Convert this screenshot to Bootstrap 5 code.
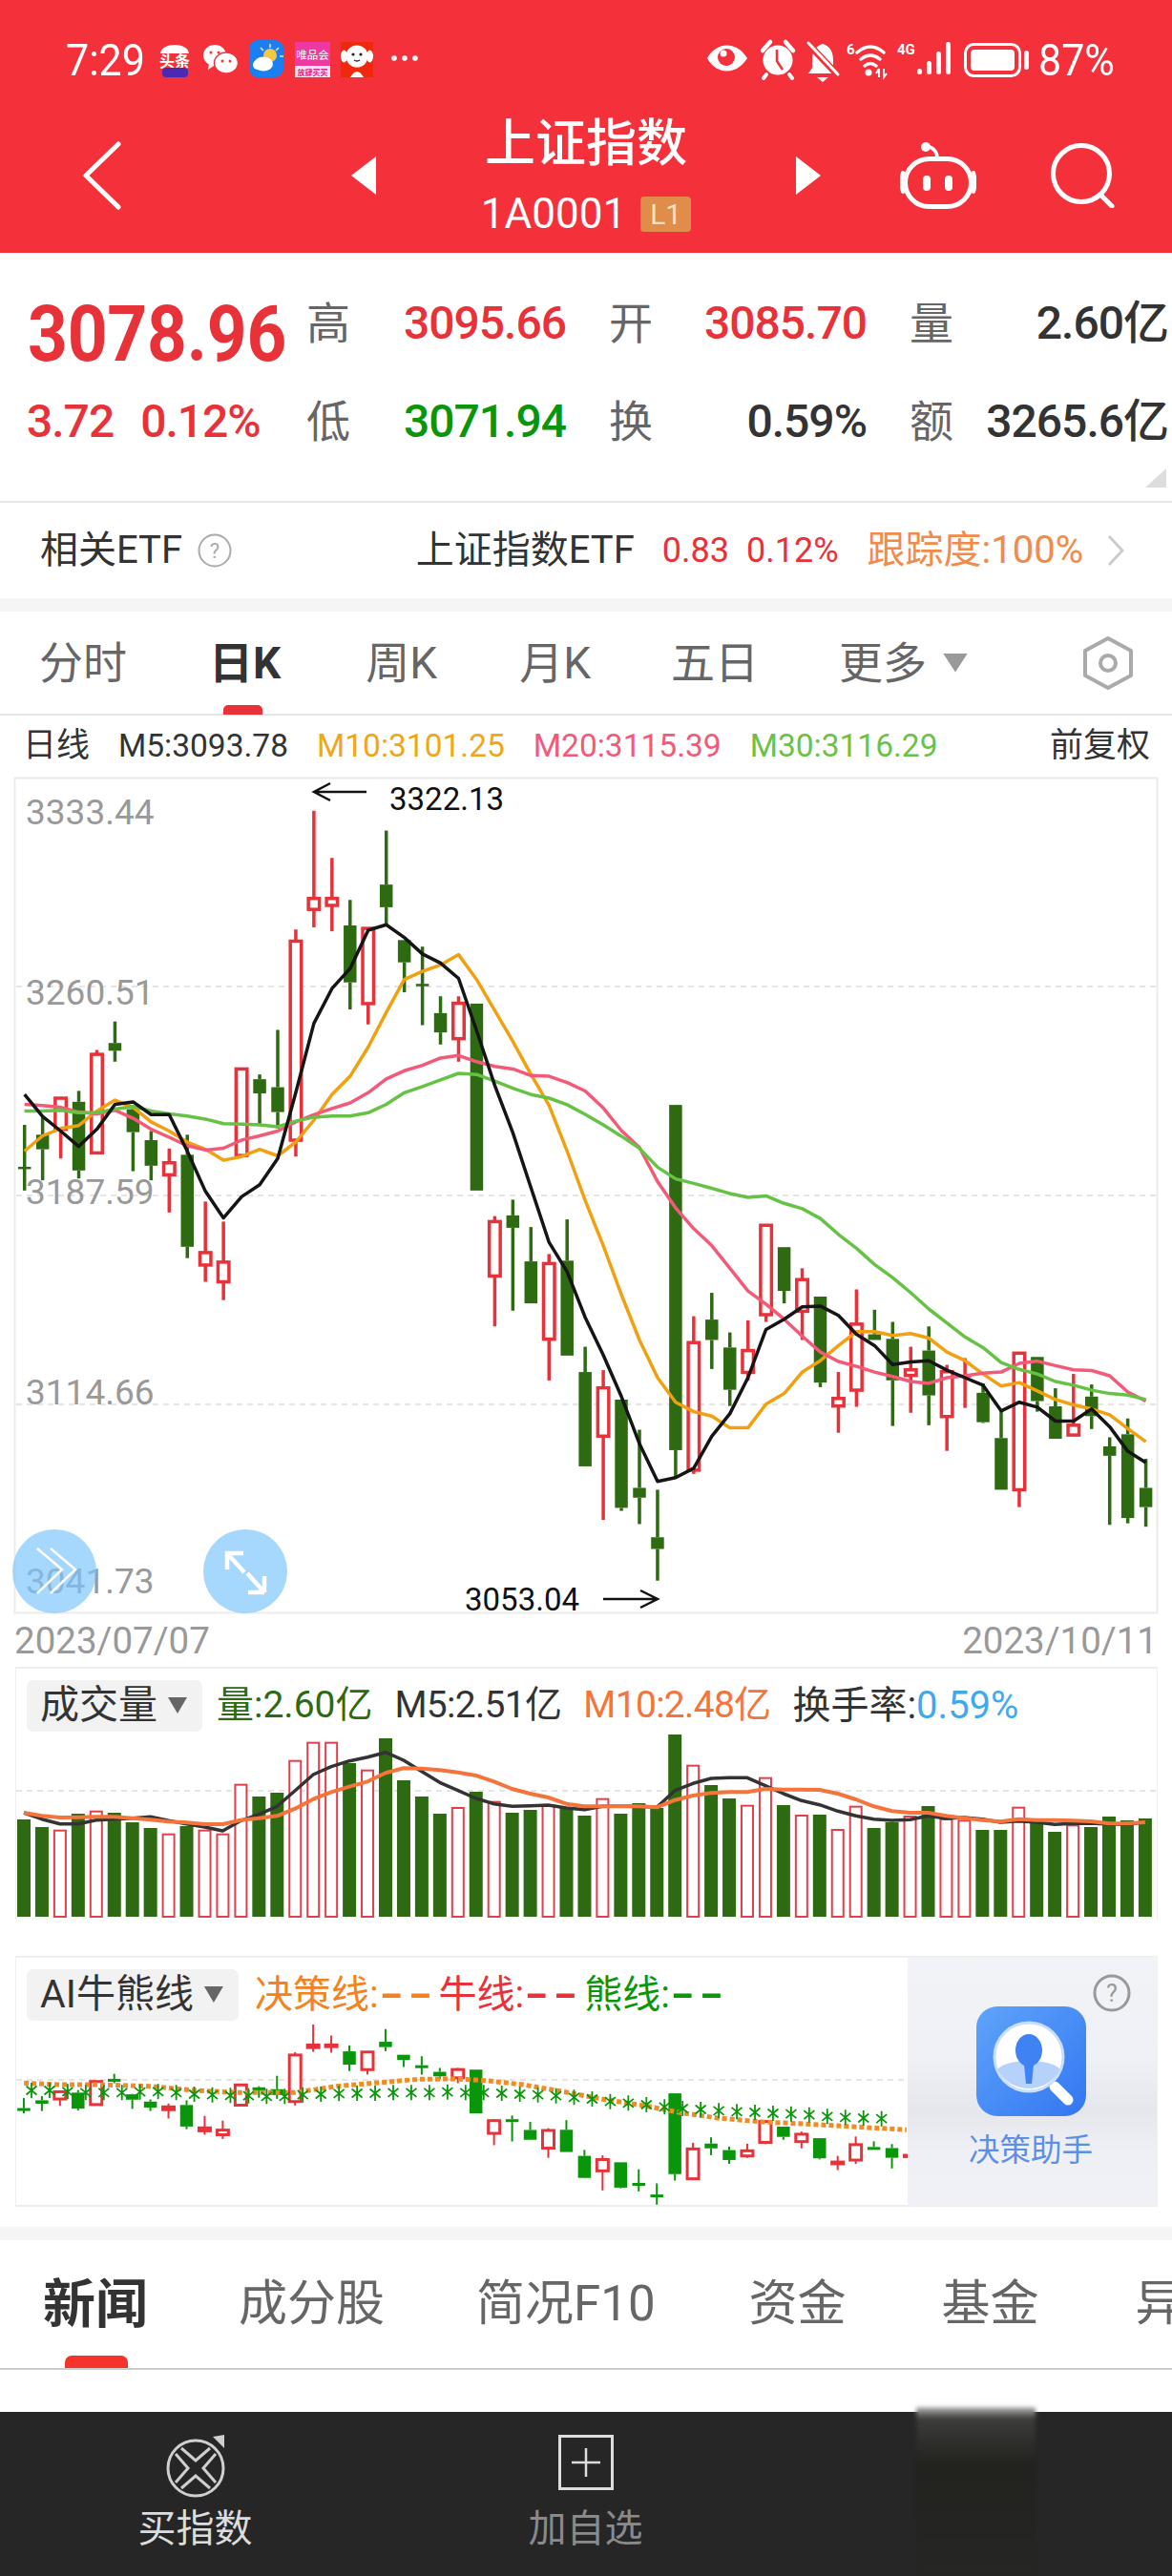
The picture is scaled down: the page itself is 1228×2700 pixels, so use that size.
<!DOCTYPE html>
<html lang="zh">
<head>
    <meta charset="UTF-8">
    <meta name="viewport" content="width=device-width, initial-scale=1.0">
    <title>上证指数</title>
    <link href="https://cdn.jsdelivr.net/npm/bootstrap@5.3.0/dist/css/bootstrap.min.css" rel="stylesheet">
    <style>
        body {
            background: #fff;
            width: 1228px;
            height: 2700px;
            overflow: hidden;
            font-family: Roboto, "Noto Sans CJK SC", sans-serif;
            color: #333;
        }
        svg { display: block; flex: none; }
        #mainChart { overflow: visible; }

        /* 顶部红色区域 */
        .top-bar { background: #f4313b; height: 265px; color: #fff; }
        .status-row { height: 115px; padding: 11px 0 0 69px; font-size: 43px; line-height: 1; }
        .status-text { display: inline-block; transform: scaleY(1.08); }
        .status-left { margin-left: 14px; }
        .status-right { margin-left: auto; }
        .status-pct { width: 143px; padding-left: 3px; }
        .title-row { height: 138px; padding-left: 86px; }
        .title-block { width: 440px; }
        .title-name { font-size: 53px; line-height: 62px; font-weight: 500; margin-bottom: 18px; }
        .title-code { font-size: 44px; line-height: 48px; gap: 15px; }
        .level-tag { background: #e08c4a; color: #f6e2cc; width: 53px; height: 37px; line-height: 37px; font-size: 30px; border-radius: 4px; }
        .tri-left { margin-left: 241px; }
        .robot-icon { margin-left: 83px; }
        .search-icon { margin-left: 78px; }

        /* 行情 */
        .quote-panel { height: 262px; border-bottom: 2px solid #e6e6e6; padding-top: 39px; }
        .quote-grid {
            display: grid;
            grid-template-columns: 321px 46px 226px 45px 45px 225px 45px 47px 224px;
            grid-auto-rows: 70px;
            row-gap: 33px;
            align-items: center;
            font-size: 48px;
            letter-spacing: -1px;
            font-weight: 500;
        }
        .quote-grid .q-label { color: #666; font-weight: 400; font-size: 46px; letter-spacing: 0; }
        .quote-price { padding-left: 29px; margin-top: 30px; line-height: 70px; }
        .quote-price span { display: inline-block; font-size: 73px; font-weight: 700; letter-spacing: -.2px; transform: scaleY(1.12); }
        .quote-change { padding-left: 28px; }
        .quote-change span + span { margin-left: 28px; }
        .text-up { color: #e8323a; }
        .text-down { color: #0a960a; }
        .corner-mark { margin: 14px 6px 0 0; }

        /* ETF */
        .etf-row { height: 100px; padding: 0 50px 0 42px; font-size: 40px; }
        .etf-help { margin-left: 16px; }
        .etf-values { font-size: 36px; margin-left: 29px; margin-right: 30px; }
        .etf-values span + span { margin-left: 18px; }
        .etf-track { color: #f28a4a; margin-right: 25px; }
        .gap-band { height: 14px; background: #f5f5f5; }

        /* 周期切换 */
        .period-tabs { height: 109px; padding-left: 41px; border-bottom: 2px solid #e6e6e6; gap: 86px; font-size: 46px; flex-wrap: nowrap; }
        .period-tabs .nav-link { padding: 0; color: #666; line-height: 108px; position: relative; white-space: nowrap; }
        .period-tabs .nav-link.active-tab { color: #333; font-weight: 700; }
        .period-tabs .nav-link.active-tab::after {
            content: "";
            position: absolute;
            left: 15px;
            bottom: 0;
            width: 41px;
            height: 10px;
            background: #e8323a;
            border-radius: 5px 5px 0 0;
        }
        .period-tabs .tab-week { margin-left: 3px; }
        .period-tabs .tab-tight { margin-left: -2px; }
        .more-arrow { width: 26px; height: 20px; background: #999; clip-path: polygon(0 0, 100% 0, 50% 100%); margin-left: 17px; }
        .period-hex { margin-left: auto; margin-right: 40px; }

        .ma-row { height: 65px; padding: 0 23px 0 24px; font-size: 33.5px; gap: 30px; }
        .ma-row .ma-name { font-size: 35px; }
        .ma-10 { color: #eea71b; }
        .ma-20 { color: #f25a7a; }
        .ma-30 { color: #6bc246; }

        .date-row { height: 56px; padding: 0 15px 0 15px; color: #999; font-size: 38.5px; line-height: 58px; }

        /* 副图 */
        .sub-panel { margin: 0 15px 0 16px; border: solid #eee; border-width: 2px 1px 0; padding-top: 11px; }
        .ai-panel { margin-top: 38px; height: 263px; border-width: 2px 1px; padding-top: 0; }
        .legend-row { height: 55px; padding-left: 11px; font-size: 39px; gap: 23px; white-space: nowrap; }
        .legend-chip { background: #f2f2f2; border-radius: 7px; height: 54px; padding: 0 16px 0 14px; gap: 11px; font-size: 41px; margin-right: -8px; }
        .chip-arrow { width: 20px; height: 17px; background: #666; clip-path: polygon(0 0, 100% 0, 50% 100%); }
        .vol-amount { color: #2e6a12; }
        .vol-ma { letter-spacing: -.7px; }
        .vol-m10 { color: #f4743b; }
        .vol-turnover { font-size: 40px; }
        .vol-rate { color: #3fa9ef; }
        .ai-left { padding-top: 11px; width: 934px; }
        .ai-legend { gap: 16px; font-size: 40px; }
        .ai-legend .legend-chip { margin-right: 1px; }
        .dash-pair {
            display: inline-block;
            width: 47px;
            font-weight: 700;
            letter-spacing: 2px;
            transform: scaleX(1.7);
            transform-origin: left center;
        }
        .ai-orange { color: #f58220; }
        .assist-panel {
            width: 262px;
            height: 261px;
            margin-top: -1px;
            background: linear-gradient(180deg, #f2f3f7 0, #f0f1f6 40%, #e6e7ec 62%, #eff0f6 78%, #f0f1f7 100%);
        }
        .assist-help { align-self: flex-end; margin: 18px 27px 0 0; }
        .assist-logo { margin-top: -6px; margin-right: 3px; }
        .assist-name { color: #5b8fe8; font-size: 32.5px; line-height: 40px; margin-top: 16px; margin-right: 3px; }

        /* 资讯 tab */
        .news-band { margin-top: 21px; }
        .news-tabs { height: 136px; border-bottom: 2px solid #ccc; padding-left: 45px; font-size: 51px; flex-wrap: nowrap; overflow: hidden; gap: 98px; }
        .news-tabs .nav-link { padding: 0; color: #666; line-height: 136px; position: relative; white-space: nowrap; }
        .news-tabs .nav-link.active-tab { color: #333; font-weight: 700; font-size: 55px; }
        .news-tabs .nav-link.active-tab::after {
            content: "";
            position: absolute;
            left: 23px;
            bottom: 0;
            width: 66px;
            height: 14px;
            background: #f5332d;
            border-radius: 7px 7px 0 0;
        }
        .news-tabs .tab-second { margin-left: -3px; }
        .news-tabs .tab-third { margin-left: -2px; }
        .news-tabs .tab-fund { margin-left: 2px; }
        .news-tabs .tab-last { margin-left: 3px; }

        /* 底栏 */
        .bottom-bar { background: #262626; height: 172px; margin-top: 44px; }
        .bottom-item { width: 409px; padding-top: 24px; font-size: 40px; line-height: 48px; }
        .bottom-item .item-text { margin-top: 9px; }
        .item-buy { color: #dcdcdc; }
        .item-watch { color: #8a8a8a; }
        .bottom-smudge {
            width: 125px;
            margin: -5px 0 0 142px;
            background: linear-gradient(180deg, #b4b4b4 0, #3c3c3a 12px, #22221f 60px, #262624 100%);
            filter: blur(2px);
        }
    </style>
</head>
<body>
    <!-- 顶部 -->
    <header class="top-bar">
        <div class="status-row d-flex align-items-center">
            <span class="status-text">7:29</span>
            <svg class="status-left" width="280" height="46" viewBox="167 40 280 46">
                <!-- 头条 -->
                <path d="M169 56 C170 44 198 44 199 56 Z" fill="#fff"/>
                <text x="184" y="70" text-anchor="middle" font-size="16" font-weight="700" fill="#fff" font-family="Noto Sans CJK SC">头条</text>
                <rect x="171" y="71" width="27" height="10" rx="4" fill="#4a2ab4"/>
                <!-- 微信 -->
                <ellipse cx="226" cy="58" rx="12" ry="11" fill="#fff"/>
                <path d="M220 67 l-1 6 6-4z" fill="#fff"/>
                <ellipse cx="238" cy="66" rx="12.5" ry="11" fill="#fff" stroke="#f4313b" stroke-width="1.5"/>
                <circle cx="222" cy="55" r="1.5" fill="#f4313b"/>
                <circle cx="230" cy="55" r="1.5" fill="#f4313b"/>
                <circle cx="234" cy="64" r="1.5" fill="#f4313b"/>
                <circle cx="242" cy="64" r="1.5" fill="#f4313b"/>
                <!-- 天气 -->
                <rect x="262" y="42" width="36" height="39" rx="9" fill="#1a80f2"/>
                <circle cx="284" cy="58" r="7" fill="#f3c743"/>
                <path d="M284 46v4M293 50l-3 3M274 50l3 3M294 59h4" stroke="#f6e49a" stroke-width="1.5"/>
                <ellipse cx="277" cy="67" rx="10" ry="7.5" fill="#fff"/>
                <circle cx="271" cy="68" r="5" fill="#fff"/>
                <!-- 唯品会 -->
                <rect x="310" y="44" width="37" height="37" fill="#ee3aa0"/>
                <text x="328.5" y="62" text-anchor="middle" font-size="11.5" fill="#fff" font-family="Noto Sans CJK SC">唯品会</text>
                <rect x="310" y="69" width="37" height="12" fill="#fbeaf3"/>
                <text x="328.5" y="79" text-anchor="middle" font-size="8" font-weight="700" fill="#d81e82" font-family="Noto Sans CJK SC">放肆买买</text>
                <!-- 京东 -->
                <rect x="358" y="44" width="34" height="37" fill="#f0290e"/>
                <circle cx="375" cy="59" r="11.5" fill="#fff"/>
                <ellipse cx="361.5" cy="59" rx="3.5" ry="6.5" fill="#fff"/>
                <ellipse cx="388.5" cy="59" rx="3.5" ry="6.5" fill="#fff"/>
                <path d="M368 81 q7-12 14 0z" fill="#fff"/>
                <circle cx="371" cy="57" r="1.6" fill="#222"/>
                <circle cx="379" cy="57" r="1.6" fill="#222"/>
                <path d="M372 63 q3 2 6 0" stroke="#222" stroke-width="1.5" fill="none"/>
                <circle cx="414" cy="61" r="2.8" fill="#fff"/>
                <circle cx="425" cy="61" r="2.8" fill="#fff"/>
                <circle cx="436" cy="61" r="2.8" fill="#fff"/>
            </svg>
            <svg class="status-right" width="350" height="46" viewBox="735 40 350 46">
                <!-- 护眼 -->
                <path d="M741 61 C751 43 772 43 783 61 C772 79 751 79 741 61 Z" fill="#fff"/>
                <circle cx="761" cy="60" r="9" fill="#f4313b"/>
                <circle cx="758" cy="56" r="3.5" fill="#fff"/>
                <!-- 闹钟 -->
                <circle cx="815" cy="63" r="15.5" fill="#fff"/>
                <path d="M799 53 l8-9 M823 44 l8 9" stroke="#fff" stroke-width="4.5" stroke-linecap="round"/>
                <path d="M814 52 v12 l6 9" stroke="#f4313b" stroke-width="2.5" fill="none"/>
                <path d="M803 78 l-3 4 M827 78 l3 4" stroke="#fff" stroke-width="4" stroke-linecap="round"/>
                <!-- 静音 -->
                <path d="M862 46 c8 2 11 9 11 17 l0 10 l5 4 l-31 0 l4-6 l0-8 c0-8 3-15 11-17z" fill="#fff"/>
                <path d="M846 45 L879 80" stroke="#f4313b" stroke-width="7"/>
                <path d="M847 45 L878 78" stroke="#fff" stroke-width="3" stroke-linecap="round"/>
                <path d="M856 81 h12 l-6 5z" fill="#fff"/>
                <!-- wifi -->
                <text x="887" y="57" font-size="15" font-weight="700" fill="#fff" font-family="Roboto">6</text>
                <path d="M898 55 q14-12 28 0 M902 62 q10-8 20 0 M906 69 q6-5 12 0" stroke="#fff" stroke-width="3.5" fill="none" stroke-linecap="round"/>
                <circle cx="910" cy="76" r="3.5" fill="#fff"/>
                <path d="M921 72 v9 M921 72 l-3 5 M926 72 v9 l3-4" stroke="#fff" stroke-width="2" fill="none"/>
                <!-- 信号 -->
                <text x="940" y="57" font-size="15" font-weight="700" fill="#fff" font-family="Roboto">4G</text>
                <rect x="961" y="72" width="5" height="6" rx="2.5" fill="#fff"/>
                <rect x="971" y="64" width="5" height="14" rx="2.5" fill="#fff"/>
                <rect x="981" y="54" width="5" height="24" rx="2.5" fill="#fff"/>
                <rect x="991" y="44" width="5" height="34" rx="2.5" fill="#fff"/>
                <!-- 电池 -->
                <rect x="1011.5" y="46.5" width="57" height="33" rx="9" fill="none" stroke="#fff" stroke-width="3"/>
                <rect x="1017" y="52" width="46" height="22" rx="4" fill="#fff"/>
                <rect x="1073" y="53" width="5" height="20" rx="2.5" fill="#fff"/>
            </svg>
            <span class="status-pct"><span class="status-text">87%</span></span>
        </div>
        <div class="title-row d-flex align-items-center">
            <svg width="41" height="72" viewBox="0 0 41 72" class="mt-n1"><path d="M38 3 L4 36 L38 69" fill="none" stroke="#fff" stroke-width="5" stroke-linecap="round" stroke-linejoin="round"/></svg>
            <svg class="tri-left" width="26" height="40" viewBox="0 0 26 40"><path d="M26 0 V40 L0 20 Z" fill="#fff"/></svg>
            <div class="title-block text-center">
                <div class="title-name">上证指数</div>
                <div class="title-code d-flex justify-content-center align-items-center">
                    <span>1A0001</span>
                    <span class="level-tag">L1</span>
                </div>
            </div>
            <svg width="26" height="40" viewBox="0 0 26 40"><path d="M0 0 V40 L26 20 Z" fill="#fff"/></svg>
            <svg class="robot-icon" width="80" height="70" viewBox="0 0 80 70">
                <circle cx="27" cy="5" r="5" fill="#fff"/>
                <path d="M28 4 C36 6 39 11 39 17" fill="none" stroke="#fff" stroke-width="3.5"/>
                <rect x="5.5" y="17.5" width="69" height="50" rx="25" fill="none" stroke="#fff" stroke-width="5"/>
                <rect x="24" y="35" width="8" height="16" rx="4" fill="#fff"/>
                <rect x="47" y="35" width="8" height="16" rx="4" fill="#fff"/>
                <path d="M3 32 q-3 10 0 20 M77 32 q3 10 0 20" stroke="#fff" stroke-width="4" fill="none" stroke-linecap="round"/>
            </svg>
            <svg class="search-icon" width="68" height="68" viewBox="0 0 68 68">
                <circle cx="32" cy="32" r="29.5" fill="none" stroke="#fff" stroke-width="5"/>
                <path d="M52 54 L64 66" stroke="#fff" stroke-width="5" stroke-linecap="round"/>
            </svg>
        </div>
    </header>

    <!-- 行情数据 -->
    <section class="quote-panel">
        <div class="quote-grid">
            <div class="quote-price text-up"><span>3078.96</span></div>
            <div class="q-label">高</div>
            <div class="text-end text-up">3095.66</div>
            <div></div>
            <div class="q-label">开</div>
            <div class="text-end text-up">3085.70</div>
            <div></div>
            <div class="q-label">量</div>
            <div class="text-end">2.60亿</div>

            <div class="quote-change text-up"><span>3.72</span><span>0.12%</span></div>
            <div class="q-label">低</div>
            <div class="text-end text-down">3071.94</div>
            <div></div>
            <div class="q-label">换</div>
            <div class="text-end">0.59%</div>
            <div></div>
            <div class="q-label">额</div>
            <div class="text-end">3265.6亿</div>
        </div>
        <div class="d-flex justify-content-end">
            <svg class="corner-mark" width="22" height="20" viewBox="0 0 22 20"><path d="M22 0 V20 H0 Z" fill="#ddd"/></svg>
        </div>
    </section>

    <!-- 相关ETF -->
    <section class="etf-row d-flex align-items-center">
        <span>相关ETF</span>
        <svg class="etf-help" width="36" height="36" viewBox="0 0 36 36">
            <circle cx="18" cy="18" r="16.5" fill="none" stroke="#aaa" stroke-width="2"/>
            <text x="18" y="26" text-anchor="middle" font-size="22" fill="#aaa" font-family="Roboto">?</text>
        </svg>
        <span class="ms-auto">上证指数ETF</span>
        <span class="etf-values text-up"><span>0.83</span><span>0.12%</span></span>
        <span class="etf-track">跟踪度:100%</span>
        <svg width="18" height="34" viewBox="0 0 18 34"><path d="M2 2 L16 17 L2 32" fill="none" stroke="#ccc" stroke-width="3"/></svg>
    </section>
    <div class="gap-band"></div>

    <!-- 周期切换 -->
    <ul class="nav period-tabs align-items-center">
        <li class="nav-item"><a class="nav-link" href="#">分时</a></li>
        <li class="nav-item"><a class="nav-link active-tab" href="#">日K</a></li>
        <li class="nav-item tab-week"><a class="nav-link" href="#">周K</a></li>
        <li class="nav-item"><a class="nav-link" href="#">月K</a></li>
        <li class="nav-item tab-tight"><a class="nav-link" href="#">五日</a></li>
        <li class="nav-item tab-tight d-flex align-items-center"><a class="nav-link" href="#">更多</a><span class="more-arrow"></span></li>
        <li class="nav-item period-hex">
            <svg width="54" height="58" viewBox="0 0 54 58">
                <path d="M27 3 L51 16 V42 L27 55 L3 42 V16 Z" fill="none" stroke="#aaa" stroke-width="4" stroke-linejoin="round"/>
                <circle cx="27" cy="29" r="8" fill="none" stroke="#aaa" stroke-width="4"/>
            </svg>
        </li>
    </ul>

    <div class="ma-row d-flex align-items-center">
        <span class="ma-name">日线</span>
        <span>M5:3093.78</span>
        <span class="ma-10">M10:3101.25</span>
        <span class="ma-20">M20:3115.39</span>
        <span class="ma-30">M30:3116.29</span>
        <span class="ma-name ms-auto">前复权</span>
    </div>

    <!-- K线主图，坐标按页面像素 -->
    <svg id="mainChart" width="1228" height="876" viewBox="0 815 1228 876"></svg>
    <div class="date-row d-flex justify-content-between">
        <span>2023/07/07</span>
        <span>2023/10/11</span>
    </div>

    <!-- 成交量 -->
    <section class="sub-panel">
        <div class="legend-row d-flex align-items-center">
            <span class="legend-chip d-flex align-items-center">成交量<span class="chip-arrow"></span></span>
            <span class="vol-amount">量:2.60亿</span>
            <span class="vol-ma">M5:2.51亿</span>
            <span class="vol-ma vol-m10">M10:2.48亿</span>
            <span class="vol-turnover">换手率:<span class="vol-rate">0.59%</span></span>
        </div>
        <svg id="volChart" width="1195" height="197" viewBox="17 1815 1195 197"></svg>
    </section>

    <!-- AI牛熊线 -->
    <section class="sub-panel ai-panel d-flex">
        <div class="ai-left">
            <div class="legend-row ai-legend d-flex align-items-center">
                <span class="legend-chip d-flex align-items-center">AI牛熊线<span class="chip-arrow"></span></span>
                <span class="ai-orange">决策线:<span class="dash-pair">--</span></span>
                <span class="text-up">牛线:<span class="dash-pair">--</span></span>
                <span class="text-down">熊线:<span class="dash-pair">--</span></span>
            </div>
            <svg id="aiChart" width="934" height="193" viewBox="17 2118 934 193"></svg>
        </div>
        <div class="assist-panel d-flex flex-column align-items-center">
            <svg class="assist-help" width="40" height="40" viewBox="0 0 40 40">
                <circle cx="20" cy="20" r="18" fill="none" stroke="#999" stroke-width="3"/>
                <text x="20" y="29" text-anchor="middle" font-size="25" fill="#999" font-family="Roboto">?</text>
            </svg>
            <svg class="assist-logo" width="115" height="115" viewBox="0 0 115 115">
                <defs>
                    <linearGradient id="logoBg" x1="0" y1="0" x2="1" y2="1">
                        <stop offset="0" stop-color="#5fa4fa"/>
                        <stop offset="1" stop-color="#3376f2"/>
                    </linearGradient>
                </defs>
                <rect width="115" height="115" rx="22" fill="url(#logoBg)"/>
                <path d="M82 84 L96 98" stroke="#fff" stroke-width="11" stroke-linecap="round"/>
                <circle cx="55" cy="53" r="36" fill="#fff" stroke="#c9defc" stroke-width="3"/>
                <path d="M22 66 C32 54 78 54 88 66 C80 80 68 86 55 86 C42 86 30 80 22 66Z" fill="#b6d2fb"/>
                <path d="M50 61 h10 l-2 20 h-6z" fill="#3f82f3"/>
                <ellipse cx="55" cy="46" rx="14" ry="17" fill="#3f82f3"/>
            </svg>
            <div class="assist-name">决策助手</div>
        </div>
    </section>

    <div class="gap-band news-band"></div>
    <ul class="nav news-tabs align-items-center">
        <li class="nav-item"><a class="nav-link active-tab" href="#">新闻</a></li>
        <li class="nav-item tab-second"><a class="nav-link" href="#">成分股</a></li>
        <li class="nav-item tab-third"><a class="nav-link" href="#">简况F10</a></li>
        <li class="nav-item"><a class="nav-link" href="#">资金</a></li>
        <li class="nav-item tab-fund"><a class="nav-link" href="#">基金</a></li>
        <li class="nav-item tab-last"><a class="nav-link" href="#">异动</a></li>
    </ul>

    <!-- 底栏 -->
    <footer class="bottom-bar d-flex">
        <div class="bottom-item item-buy d-flex flex-column align-items-center">
            <svg width="64" height="66" viewBox="0 0 64 66" fill="none" stroke="#cfcfcf" stroke-width="3">
                <circle cx="32" cy="35" r="29"/>
                <path d="M17 14 L32 27 L47 14 M53 20 L40 35 L53 50 M47 56 L32 43 L17 56 M11 50 L24 35 L11 20"/>
                <path d="M50 2 L62 0 L62 14 Z" fill="#cfcfcf" stroke="none"/>
            </svg>
            <div class="item-text">买指数</div>
        </div>
        <div class="bottom-item item-watch d-flex flex-column align-items-center">
            <svg width="58" height="58" viewBox="0 0 58 58" class="mb-2" fill="none" stroke="#ddd">
                <rect x="1.5" y="1.5" width="55" height="55" stroke-width="3"/>
                <path d="M29 14 V44 M14 29 H44" stroke-width="2.5"/>
            </svg>
            <div class="item-text">加自选</div>
        </div>
        <div class="bottom-smudge"></div>
    </footer>

    <script src="https://cdn.jsdelivr.net/npm/bootstrap@5.3.0/dist/js/bootstrap.bundle.min.js"></script>
    <script>
        const RED = '#e8323a', DARK_GREEN = '#2e6a12', GREEN = '#0a960a';
        const X = i => 25.7 + 18.95 * i;

        // 蜡烛数据 [涨跌, 最高, 实体上沿, 实体下沿, 最低]，从截图量出来的，前后两段比例不同
        const partA = [
            ['g',938,1056,1056,1118],['g',915,965,1005,1090],['r',865,865,950,1030],['g',845,875,1063,1085],
            ['r',733,745,1015,1015],['g',655,714,735,765],['g',890,895,958,1065],['g',955,980,1050,1090],
            ['r',1003,1042,1075,1178],['g',965,1020,1272,1303],['r',1148,1288,1322,1368],['r',1203,1314,1368,1418],
            ['r',785,785,1022,1022],['g',800,813,852,935],['g',678,835,903,948],['r',403,435,980,1025],
            ['r',78,318,348,397],['r',207,318,337,408],['g',322,392,548,622],['r',400,400,606,663],
            ['g',132,280,342,390],['g',432,432,493,575],['g',450,555,555,665],['g',586,632,685,718],
            ['r',586,605,702,765],['g',606,606,1118,1118],['r',1188,1203,1352,1490],['g',1143,1186,1220,1447],
            ['g',1218,1312,1427,1427],['r',1292,1318,1525,1638],['g',1197,1310,1570,1570]
        ];
        const partB = [
            ['g',788,855,1105,1105],['r',850,897,1025,1247],['g',928,928,1215,1223],['g',1008,1162,1188,1258],
            ['g',1167,1293,1324,1408],['g',147,147,1062,1135],['r',707,777,1115,1125],['g',645,716,770,847],
            ['g',750,790,902,945],['r',718,798,856,878],['r',466,466,703,722],['g',524,524,640,673],
            ['r',580,610,694,770],['g',655,655,883,895],['r',855,925,945,1016],['r',636,728,903,947],
            ['g',690,755,770,770],['g',722,767,877,998],['r',788,849,864,963],['g',734,798,917,996],
            ['r',836,854,973,1064],['r',818,866,866,950],['g',885,910,988,990],['g',958,1030,1167,1167],
            ['r',805,805,1167,1213],['g',815,815,932,960],['g',898,946,1032,1032],['r',860,996,1022,1022],
            ['g',888,920,972,1006],['g',1028,1052,1077,1260],['g',978,1020,1242,1256],['g',1085,1162,1213,1265]
        ];
        const yA = y => 820 + y / 2.613;
        const yB = y => 1100 + y / 2.529;
        const candles = [
            ...partA.map(c => [c[0], yA(c[1]), yA(c[2]), yA(c[3]), yA(c[4])]),
            ...partB.map(c => [c[0], yB(c[1]), yB(c[2]), yB(c[3]), yB(c[4])])
        ];

        const maLines = [
            { color: '#f0a010', a: [1010,968,948,940,900,870,890,930,955,985,1005,1035,1025,1005,1023,985,925,855,805,725,630,540,518,500,472,540,625,710,800,885,1010],
              b: [400,520,650,770,870,935,960,972,1003,1003,940,912,855,825,785,748,748,758,753,765,802,825,860,892,883,905,928,942,953,968,1005,1040] },
            { color: '#f25a78', a: [882,885,890,903,908,898,920,950,972,995,1007,1002,980,968,955,930,910,893,878,850,812,790,775,755,748,765,778,785,803,805,822],
              b: [110,155,215,260,350,420,475,520,580,640,675,715,760,802,827,840,855,867,880,885,870,865,858,855,832,826,838,849,851,865,908,932] },
            { color: '#66c245', a: [900,900,898,905,905,895,888,900,908,914,922,935,936,938,943,928,917,914,914,905,882,850,833,815,797,800,818,838,855,865,883],
              b: [172,200,230,262,312,343,355,368,382,392,388,408,422,448,490,527,570,605,645,688,725,762,790,830,848,860,880,890,903,912,916,928] },
            { color: '#151515', a: [855,915,955,997,950,882,875,910,910,1010,1120,1193,1135,1102,1030,850,660,565,510,405,390,425,470,495,537,680,830,960,1110,1260,1340],
              b: [710,810,920,1045,1145,1135,1110,1025,965,870,742,715,682,680,705,755,785,835,828,825,850,870,890,958,935,948,985,985,953,1000,1065,1095] }
        ];

        const volTops = [531,555,566,513,506,510,540,558,578,552,566,578,422,459,447,347,290,290,354,377,276,408,459,513,495,444,476,510,501,488,492,519,467,513,480,495,264,362,423,465,488,401,486,519,516,564,491,558,540,522,489,531,535,564,564,494,540,570,550,555,522,534,528];
        const volBlack = [510,530,545,545,533,530,527,523,535,545,555,567,535,515,490,440,390,365,347,335,320,345,380,415,440,465,482,490,488,486,495,500,490,490,490,493,440,418,402,400,400,425,450,472,485,505,520,530,534,532,520,528,525,530,540,536,540,547,544,543,546,546,540];
        const volOrange = [510,520,525,524,523,523,527,532,538,541,546,546,533,527,520,497,467,445,428,412,385,370,371,376,383,393,412,435,450,462,482,490,490,490,490,493,470,456,448,445,445,435,437,437,438,450,468,490,505,510,510,520,527,533,538,530,533,533,535,537,544,544,540];

        const bearLine = [483,483,487,490,490,490,488,487,490,495,497,499,500,502,502,497,495,493,492,492,490,490,490,488,490,490,492,495,497,500,505,510,518,523,528,535,540,543,547,550,552,555,557,560,565,568,570,572];
        const decisionLine = [[32,460],[80,465],[130,465],[200,470],[260,483],[320,490],[395,490],[450,470],[510,458],[560,448],[610,447],[650,452],[700,465],[760,490],[810,512],[860,530],[910,553],[960,570],[1020,582],[1090,590],[1213,607]];

        function rect(x, y, w, h, fill, extra) {
            return `<rect x="${x}" y="${y}" width="${w}" height="${h}" fill="${fill}" ${extra || ''}/>`;
        }
        function poly(points, color, width, extra) {
            const d = points.map(p => p[0].toFixed(1) + ',' + p[1].toFixed(1)).join(' ');
            return `<polyline points="${d}" fill="none" stroke="${color}" stroke-width="${width}" stroke-linejoin="round" ${extra || ''}/>`;
        }
        function dashed(y, x1, x2) {
            return `<line x1="${x1}" x2="${x2}" y1="${y}" y2="${y}" stroke="#ddd" stroke-width="1.5" stroke-dasharray="6 5"/>`;
        }

        function drawCandle(c, i, map, green, wick, strokeW, minGreen) {
            const x = X(i), up = c[0] === 'r', color = up ? RED : green;
            const hi = map(c[1]), top = map(c[2]), bot = map(c[3]), lo = map(c[4]);
            let s = rect(x - wick / 2, hi, wick, top - hi, color) + rect(x - wick / 2, bot, wick, lo - bot, color);
            if (bot - top < 1 && !minGreen) {
                s += rect(x - 6.75, top - 1.2, 13.5, 2.5, color);
            } else if (up) {
                // 红K空心，实体外沿比绿K宽一点
                s += rect(x - 7.5 + strokeW / 2, top, 15 - strokeW, bot - top, '#fff', `stroke="${RED}" stroke-width="${strokeW}"`);
            } else {
                s += rect(x - 6.75, top, 13.5, Math.max(bot - top, minGreen), color);
            }
            return s;
        }

        // 主图
        let main = '';
        main += `<rect x="15.5" y="815.5" width="1197" height="875" fill="none" stroke="#ebebeb" stroke-width="2"/>`;
        [1034, 1253, 1472].forEach(y => { main += dashed(y, 17, 1212); });
        [['3333.44', 864], ['3260.51', 1053], ['3187.59', 1262], ['3114.66', 1472], ['3041.73', 1670]].forEach(t => {
            main += `<text x="27" y="${t[1]}" font-size="37" fill="#999" font-family="Roboto">${t[0]}</text>`;
        });
        candles.forEach((c, i) => { main += drawCandle(c, i, y => y, DARK_GREEN, 3.5, 3.5, 0); });
        maLines.forEach(l => {
            const pts = [...l.a.map((y, i) => [X(i), yA(y)]), ...l.b.map((y, i) => [X(i + 31), yB(y)])];
            main += poly(pts, l.color, 3.5);
        });
        main += `<path d="M384 830 H329 M346 821 L329 830 L346 839" fill="none" stroke="#111" stroke-width="2.5"/>`;
        main += `<text x="408" y="849" font-size="33" fill="#111" font-family="Roboto">3322.13</text>`;
        main += `<text x="487" y="1688" font-size="33" fill="#111" font-family="Roboto">3053.04</text>`;
        main += `<path d="M632 1676 H689 M671 1667 L689 1676 L671 1685" fill="none" stroke="#111" stroke-width="2.5"/>`;
        // 左下角两个悬浮按钮
        main += `<circle cx="57" cy="1647" r="44" fill="#7cc4fa" opacity=".68"/>`;
        main += `<path d="M39 1623 L65 1645 L39 1670 M53 1623 L79 1645 L53 1670" fill="none" stroke="#fff" stroke-width="2.5"/>`;
        main += `<circle cx="257" cy="1647" r="44" fill="#7cc4fa" opacity=".68"/>`;
        main += `<path d="M255 1628 H238 V1645 M238 1628 L256 1648 M277 1669 H260 M277 1652 V1669 M277 1669 L259 1649" fill="none" stroke="#fff" stroke-width="4.5"/>`;
        document.getElementById('mainChart').innerHTML = main;

        // 成交量
        const yVol = y => 1730 + y / 3;
        let vol = dashed(1877, 17, 1212);
        volTops.forEach((t, i) => {
            const x = X(i) - 0.7, top = yVol(t);
            if (candles[i][0] === 'r') {
                vol += rect(x - 6, top, 12, 2009 - top, '#fff', 'stroke="#e0404c" stroke-width="2"');
            } else {
                vol += rect(x - 7, top, 14, 2009 - top, DARK_GREEN);
            }
        });
        vol += poly(volBlack.map((y, i) => [X(i) - 0.7, yVol(y)]), '#333', 3.5);
        vol += poly(volOrange.map((y, i) => [X(i) - 0.7, yVol(y)]), '#f4743b', 4);
        document.getElementById('volChart').innerHTML = vol;

        // AI牛熊线
        const yMini = y => 2122 + (y - 850) * 0.234;
        const yAi = y => 2030 + y / 3;
        let ai = dashed(2180, 17, 950);
        candles.forEach((c, i) => {
            ai += drawCandle(c, i - 0.04, yMini, GREEN, 2, 3, 3);
        });
        ai += poly(decisionLine.map(p => [p[0] / 1.277, yAi(p[1])]), '#f08c28', 5, 'stroke-dasharray="5 3"');
        bearLine.forEach((y, i) => {
            const x = 33 + 18.95 * i, cy = yAi(y);
            ai += `<path d="M${x} ${cy - 8} V${cy + 8} M${x - 5.5} ${cy - 4.5} L${x + 5.5} ${cy + 4.5} M${x - 5.5} ${cy + 4.5} L${x + 5.5} ${cy - 4.5}" stroke="${GREEN}" stroke-width="1.8"/>`;
        });
        document.getElementById('aiChart').innerHTML = ai;
    </script>
</body>
</html>
